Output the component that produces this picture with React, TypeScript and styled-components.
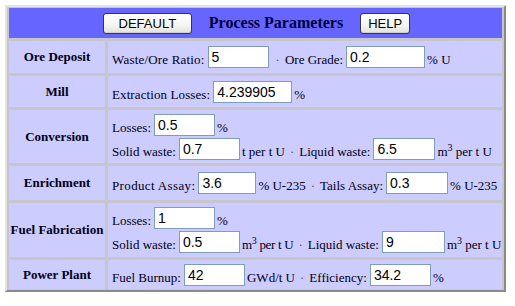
import React from "react";
import styled, { createGlobalStyle } from "styled-components";

const GlobalStyle = createGlobalStyle`
  html, body {
    margin: 0;
    padding: 0;
    background: #ffffff;
  }
  body {
    font-family: "Liberation Serif", "Times New Roman", serif;
    font-size: 13px;
    color: #000;
  }
`;

const Panel = styled.div`
  display: grid;
  grid-template-columns: 96px 394px;
  grid-template-rows: 30px 32px 31px 53px 34px 54px 29px;
  gap: 3px;
  width: max-content;
  margin: 5px 0 0 5px;
  padding: 1px 2px;
  background: #c6c6cc;
  border: 2px solid;
  border-color: #e4e4e4 #8a8a8a #8a8a8a #e4e4e4;
`;

const HeaderCell = styled.div`
  grid-column: 1 / span 2;
  display: flex;
  align-items: center;
  justify-content: center;
  gap: 17px;
  background: #6666ff;
  padding-left: 2px;
`;

const Title = styled.span`
  font-family: "Liberation Serif", "Times New Roman", serif;
  font-weight: bold;
  font-size: 16px;
  color: #000040;
`;

const Button = styled.button<{ $w: number }>`
  width: ${(p) => p.$w}px;
  height: 21px;
  padding: 0;
  font-family: "Liberation Sans", Arial, sans-serif;
  font-size: 13px;
  color: #000;
  background: linear-gradient(#ffffff 0%, #f6f6f3 55%, #e2e2dc 100%);
  border: 1px solid #30384a;
  border-radius: 3px;
  box-shadow: inset 0 -1px 0 #d0cfc8;
  cursor: pointer;
`;

const LabelCell = styled.div`
  display: flex;
  align-items: center;
  justify-content: center;
  background: #ccccff;
  font-weight: bold;
  font-size: 13px;
  color: #000018;
  white-space: nowrap;
`;

const FieldCell = styled.div`
  display: flex;
  flex-direction: column;
  justify-content: center;
  gap: 2px;
  padding-left: 4px;
  background: #ccccff;
`;

const Line = styled.div`
  display: flex;
  align-items: flex-end;
  white-space: pre;
`;

const Text = styled.span<{ $ls?: number }>`
  line-height: 15px;
  margin-bottom: 1px;
  color: #000010;
  letter-spacing: ${(p) => p.$ls ?? 0}px;
`;

const Sep = styled(Text)`
  margin-left: 5px;
  margin-right: 5px;
  color: #555;
`;

const Field = styled.input<{ $w: number }>`
  box-sizing: border-box;
  width: ${(p) => p.$w}px;
  height: 22px;
  margin: 0 2px 0 3px;
  padding: 0 3px;
  border: 1px solid #7f9db9;
  background: #fff;
  font-family: "Liberation Sans", Arial, sans-serif;
  font-size: 14px;
  color: #000;
  outline: none;
`;

const Sup = styled.sup`
  font-size: 10px;
  line-height: 0;
`;

const Cubed = () => (
  <>
    m<Sup>3</Sup>
  </>
);

export default function App() {
  return (
    <>
      <GlobalStyle />
      <Panel>
        <HeaderCell>
          <Button $w={89}>DEFAULT</Button>
          <Title>Process Parameters</Title>
          <Button $w={50}>HELP</Button>
        </HeaderCell>

        <LabelCell>Ore Deposit</LabelCell>
        <FieldCell>
          <Line>
            <Text $ls={0.19}>Waste/Ore Ratio:</Text>
            <Field $w={61} defaultValue="5" />
            <Sep>·</Sep>
            <Text>Ore Grade:</Text>
            <Field $w={79} defaultValue="0.2" />
            <Text>% U</Text>
          </Line>
        </FieldCell>

        <LabelCell>Mill</LabelCell>
        <FieldCell>
          <Line>
            <Text $ls={0.1}>Extraction Losses:</Text>
            <Field $w={79} defaultValue="4.239905" />
            <Text>%</Text>
          </Line>
        </FieldCell>

        <LabelCell>Conversion</LabelCell>
        <FieldCell>
          <Line>
            <Text>Losses:</Text>
            <Field $w={61} defaultValue="0.5" />
            <Text>%</Text>
          </Line>
          <Line>
            <Text>Solid waste:</Text>
            <Field $w={61} defaultValue="0.7" />
            <Text>t per t U</Text>
            <Sep>·</Sep>
            <Text>Liquid waste:</Text>
            <Field $w={62} defaultValue="6.5" />
            <Text>
              <Cubed /> per t U
            </Text>
          </Line>
        </FieldCell>

        <LabelCell>Enrichment</LabelCell>
        <FieldCell>
          <Line>
            <Text $ls={0.36}>Product Assay:</Text>
            <Field $w={58} defaultValue="3.6" />
            <Text>% U-235</Text>
            <Sep>·</Sep>
            <Text>Tails Assay:</Text>
            <Field $w={62} defaultValue="0.3" />
            <Text>% U-235</Text>
          </Line>
        </FieldCell>

        <LabelCell>Fuel Fabrication</LabelCell>
        <FieldCell>
          <Line>
            <Text>Losses:</Text>
            <Field $w={61} defaultValue="1" />
            <Text>%</Text>
          </Line>
          <Line>
            <Text>Solid waste:</Text>
            <Field $w={61} defaultValue="0.5" />
            <Text $ls={-0.3}>
              <Cubed /> per t U
            </Text>
            <Sep>·</Sep>
            <Text>Liquid waste:</Text>
            <Field $w={63} defaultValue="9" />
            <Text>
              <Cubed /> per t U
            </Text>
          </Line>
        </FieldCell>

        <LabelCell>Power Plant</LabelCell>
        <FieldCell>
          <Line>
            <Text>Fuel Burnup:</Text>
            <Field $w={61} defaultValue="42" />
            <Text>GWd/t U</Text>
            <Sep>·</Sep>
            <Text>Efficiency:</Text>
            <Field $w={61} defaultValue="34.2" />
            <Text>%</Text>
          </Line>
        </FieldCell>
      </Panel>
    </>
  );
}
